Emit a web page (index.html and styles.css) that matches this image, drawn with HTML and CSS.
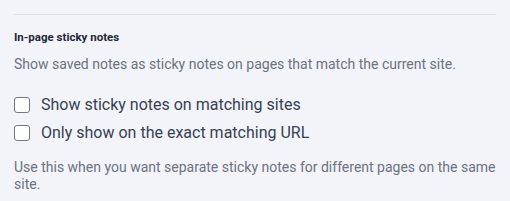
FILE: index.html
```html
<!DOCTYPE html>
<html lang="en">
<head>
    <meta charset="UTF-8">
    <title>Settings</title>
    <link rel="stylesheet" href="styles.css">
</head>
<body>
    <div class="section">
        <h3>In-page sticky notes</h3>
        <p class="hint">Show saved notes as sticky notes on pages that match the current site.</p>

        <div class="options">
            <label class="option">
                <input type="checkbox" id="showNotes">
                <span class="box"></span>
                Show sticky notes on matching sites
            </label>
            <label class="option">
                <input type="checkbox" id="exactUrl">
                <span class="box"></span>
                Only show on the exact matching URL
            </label>
        </div>
        <p class="hint note">Use this when you want separate sticky notes for different pages on the same site.</p>
    </div>
</body>
</html>
```

FILE: styles.css
```css
body {
    margin: 0;
    padding: 14px 14px 0;
    background-color: #f3f4f9;
    font-family: Roboto, "Noto Sans", sans-serif;
    color: #374151;
}

.section {
    border-top: 1px solid #dfe1e8;
    padding-top: 15px;
}

h3 {
    margin: 0;
    font-size: 11.5px;
    font-weight: bold;
    color: #1f2937;
    line-height: 14px;
}

.hint {
    margin: 11px 0 0;
    font-size: 14px;
    line-height: 18px;
    color: #6b7280;
}

.options {
    margin-top: 18px;
}

.option {
    display: flex;
    align-items: center;
    gap: 11px;
    font-size: 16px;
    line-height: 28px;
    color: #374151;
    cursor: pointer;
}

.option input {
    display: none;
}

.box {
    width: 14px;
    height: 14px;
    border: 1px solid #737884;
    border-radius: 3px;
    background: #ffffff;
}

.note {
    margin-top: 12px;
    line-height: 17px;
}
```
